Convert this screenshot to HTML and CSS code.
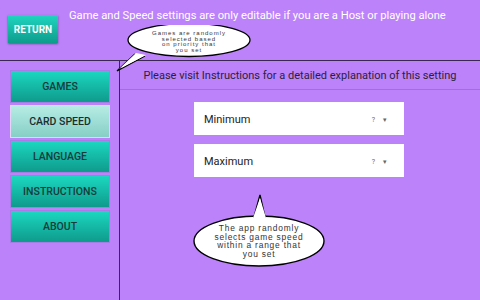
FILE: index.html
```html
<!DOCTYPE html>
<html lang="en">
    <head>
        <meta charset="UTF-8">
        <title>Settings</title>
        <link rel="stylesheet" href="styles.css">
    </head>
    <body>
      <div id="top">
        <button type="button" id="return">RETURN</button>
        <span id="title">Game and Speed settings are only editable if you are a Host or playing alone</span>
      </div>
      <div id="main">
        <div id="side">
          <button type="button" class="tab">GAMES</button>
          <button type="button" class="tab selected">CARD SPEED</button>
          <button type="button" class="tab">LANGUAGE</button>
          <button type="button" class="tab">INSTRUCTIONS</button>
          <button type="button" class="tab">ABOUT</button>
        </div>
        <div id="content">
          <p id="hint">Please visit Instructions for a detailed explanation of this setting</p>
          <div class="picker">
            <span>Minimum</span>
            <span class="value">?<i>&#9662;</i></span>
          </div>
          <div class="picker">
            <span>Maximum</span>
            <span class="value">?<i>&#9662;</i></span>
          </div>
        </div>
      </div>

      <!-- speech bubbles -->
      <div class="bubble" id="bubble-games">
        <svg width="140" height="50" viewBox="0 0 140 50">
          <path d="M19 29 L 1 46 L 29 31" fill="#fff" stroke="#000" stroke-width="1.3" stroke-linejoin="miter"/>
          <ellipse cx="73" cy="15" rx="61" ry="16.5" fill="#fff" stroke="#000" stroke-width="1.3"/>
          <path d="M20 28 L 3 44 L 30 30" fill="#fff" stroke="none"/>
        </svg>
        <p>Games are randomly<br>selected based<br>on priority that<br>you set</p>
      </div>
      <div class="bubble" id="bubble-speed">
        <svg width="140" height="80" viewBox="0 0 140 80">
          <ellipse cx="70" cy="48" rx="65" ry="25" fill="#fff" stroke="#000" stroke-width="1.4"/>
          <path d="M65 24 L 71 2 L 76 24 Z" fill="#fff" stroke="#000" stroke-width="1.4" stroke-linejoin="miter"/>
          <path d="M64 25 L 71 5 L 77 25 Z" fill="#fff"/>
        </svg>
        <p>The app randomly<br>selects game speed<br>within a range that<br>you set</p>
      </div>
    </body>
</html>
```

FILE: styles.css
```css
body {
    background: #bc82fa;
    font-family: Roboto, "Liberation Sans", sans-serif;
    margin: 0;
    padding: 0;
    width: 480px;
    height: 300px;
    overflow: hidden;
    position: relative;
}

#top {
    display: flex;
    align-items: flex-start;
    border-bottom: 1px solid #3b2752;
    box-sizing: border-box;
    height: 61px;
}

#return {
    flex-shrink: 0;
    margin: 15px 0 0 8px;
    width: 50px;
    height: 28px;
    padding: 0;
    border: 0;
    background: linear-gradient(#1fd6bf, #0e9c8c);
    box-shadow: 0 1px 2px rgba(40, 20, 70, 0.5);
    color: #fff;
    font-family: Roboto, sans-serif;
    font-weight: bold;
    font-size: 10px;
}

#title {
    margin: 9px 0 0 11px;
    color: #fff;
    font-size: 11.2px;
    white-space: nowrap;
}

#main {
    display: flex;
    height: 239px;
}

#side {
    width: 120px;
    border-right: 1px solid #3b2752;
    display: flex;
    flex-direction: column;
    gap: 2px;
    padding: 9px 0 0 10px;
    box-sizing: border-box;
}

.tab {
    width: 100px;
    height: 33px;
    padding: 0;
    border: 1px solid #a97be6;
    background: linear-gradient(#1bd8c0, #0f9a8c);
    color: #163c3a;
    font-family: Roboto, sans-serif;
    font-weight: 500;
    font-size: 10.5px;
}

.tab.selected {
    background: linear-gradient(#b6ece4, #86cfc6);
    border-color: #e4d4fb;
    color: #1a2e30;
}

#content {
    flex: 1;
}

#hint {
    margin: 0 0 12px 0;
    height: 28px;
    line-height: 30px;
    border-bottom: 1px solid #a070d8;
    text-align: center;
    font-size: 11px;
    color: #2a1f3c;
}

.picker {
    display: flex;
    justify-content: space-between;
    align-items: center;
    margin: 0 0 9px 74px;
    width: 210px;
    height: 33px;
    background: #fff;
    box-sizing: border-box;
    padding: 2px 17px 0 10px;
    font-size: 11px;
    color: #222;
}

.picker .value {
    font-size: 7px;
    color: #666;
}

.picker .value i {
    font-style: normal;
    margin-left: 8px;
    font-size: 7px;
}

.bubble {
    position: absolute;
}

.bubble svg {
    display: block;
}

.bubble p {
    position: absolute;
    margin: 0;
    text-align: center;
    color: #333;
    font-family: "Liberation Sans", Arial, sans-serif;
}

#bubble-games {
    left: 116px;
    top: 25px;
}

#bubble-games p {
    left: 12px;
    top: 6px;
    width: 122px;
    font-size: 6px;
    line-height: 5.6px;
    letter-spacing: 1px;
}

#bubble-speed {
    left: 189px;
    top: 193px;
}

#bubble-speed p {
    left: 5px;
    top: 31px;
    width: 130px;
    font-size: 8.4px;
    line-height: 8.5px;
    letter-spacing: 0.8px;
}
```
